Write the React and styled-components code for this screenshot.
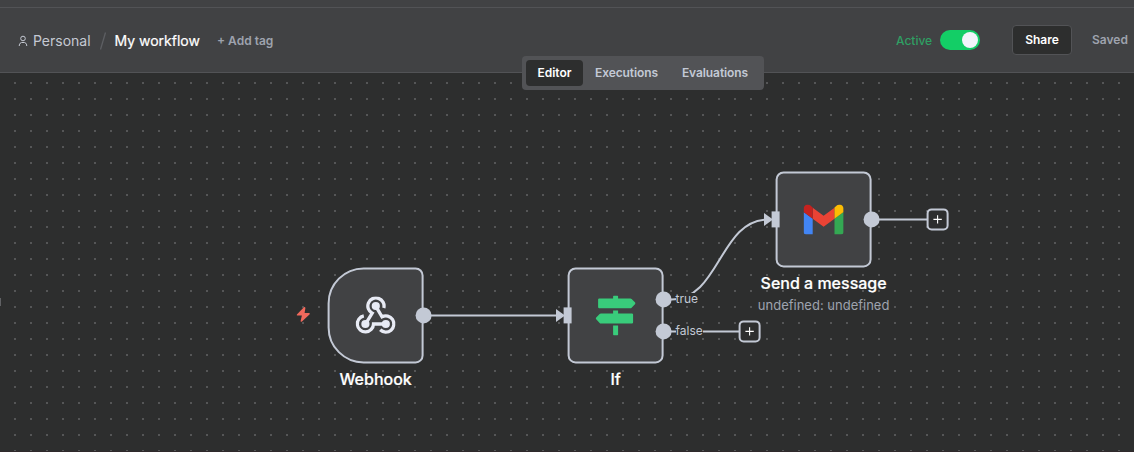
import React from "react";
import styled, { createGlobalStyle, css } from "styled-components";

const c = {
  bar: "#414244",
  line: "#525356",
  canvas: "#2d2e2e",
  dot: "#555657",
  edge: "#c3c9d5",
  muted: "#9ea3ae",
};

const Global = createGlobalStyle`
  html, body { margin: 0; height: 100%; overflow: hidden; background: ${c.canvas}; }
  * { box-sizing: border-box; }
  body { font-family: Inter, "Liberation Sans", sans-serif; }
`;

const Page = styled.div`
  display: flex;
  flex-direction: column;
  width: 1134px;
  height: 452px;
  overflow: hidden;
`;

const TopStrip = styled.div`
  flex: none;
  height: 8px;
  background: ${c.bar};
  border-bottom: 1px solid ${c.line};
`;

const Header = styled.header`
  flex: none;
  position: relative;
  display: flex;
  align-items: center;
  justify-content: space-between;
  height: 65px;
  padding: 0 6px 0 18px;
  background: ${c.bar};
  border-bottom: 1px solid ${c.line};
`;

const Crumbs = styled.div`
  display: flex;
  align-items: center;
  padding-top: 2px;
  font-size: 14px;
  line-height: 18px;
  white-space: nowrap;
`;

const UserIcon = styled.svg`
  width: 10px;
  height: 12px;
  margin-right: 5px;
`;

const Project = styled.span`
  width: 58px;
  color: #c5c9d3;
`;

const Slash = styled.svg`
  width: 8px;
  height: 20px;
  margin: 0 7.5px 0 8px;
`;

const Title = styled.span`
  width: 85.5px;
  color: #fff;
  -webkit-text-stroke: 0.2px #fff;
`;

const AddTag = styled.button`
  margin-left: 17px;
  padding: 0;
  border: 0;
  background: none;
  font: 600 12px/18px Inter, "Liberation Sans", sans-serif;
  color: ${c.muted};
`;

const Actions = styled.div`
  display: flex;
  align-items: center;
  white-space: nowrap;
`;

const Status = styled.span`
  width: 36px;
  margin: 2px 8px 0 0;
  font-size: 12px;
  font-weight: 500;
  line-height: 18px;
  color: #2f9f63;
`;

const Toggle = styled.span`
  display: flex;
  align-items: center;
  justify-content: flex-end;
  width: 40px;
  height: 20px;
  padding: 2px;
  border-radius: 10px;
  background: #13ce66;
`;

const Knob = styled.span`
  width: 16px;
  height: 16px;
  border-radius: 50%;
  background: #f2f4fa;
`;

const Share = styled.button`
  width: 60px;
  height: 30px;
  margin: 0 20px 0 32px;
  padding: 0;
  border: 1px solid ${c.line};
  border-radius: 4px;
  background: ${c.canvas};
  font: 600 12px/16px Inter, "Liberation Sans", sans-serif;
  color: #fff;
`;

const Saved = styled.span`
  width: 36px;
  font-size: 12px;
  font-weight: 600;
  line-height: 16px;
  color: ${c.muted};
`;

const Tabs = styled.nav`
  position: absolute;
  z-index: 2;
  left: 522px;
  top: 48px;
  display: flex;
  width: 242px;
  height: 34px;
  padding: 4px;
  border-radius: 4px;
  background: ${c.line};
`;

const Tab = styled.button`
  width: ${(p) => p.$width}px;
  padding: 0;
  border: 0;
  border-radius: 4px;
  background: ${(p) => (p.$active ? c.canvas : "transparent")};
  color: ${(p) => (p.$active ? "#fff" : c.edge)};
  font: 600 12px/16px Inter, "Liberation Sans", sans-serif;
  letter-spacing: ${(p) => (p.$active ? "0" : "-0.08px")};
`;

const Canvas = styled.main`
  position: relative;
  flex: 1;
  background: conic-gradient(from 270deg at 2px 2px, ${c.dot} 90deg, transparent 0) 14px 9px / 16px 16px
    ${c.canvas};
  border-bottom: 1px solid #2f292b;
`;

const Wires = styled.svg`
  position: absolute;
  left: 0;
  top: 0;
`;

const Node = styled.div`
  position: absolute;
  left: 0;
  top: 0;
  transform: translate(${(p) => p.$x}px, ${(p) => p.$y}px);
  display: flex;
  align-items: center;
  justify-content: center;
  width: 96px;
  height: 96px;
  border: 2px solid ${c.edge};
  border-radius: ${(p) => (p.$trigger ? "36px 8px 8px 36px" : "8px")};
  background: ${c.bar};
`;

const Caption = styled.div`
  position: absolute;
  top: 99.5px;
  left: 50%;
  display: flex;
  flex-direction: column;
  align-items: center;
  transform: translateX(-50%);
  white-space: nowrap;
  font-size: 16px;
  font-weight: 500;
  line-height: 20px;
  color: #fff;
  -webkit-text-stroke: 0.2px #fff;
`;

const Subtitle = styled.span`
  margin-top: 3px;
  font-size: 13px;
  font-weight: 400;
  line-height: 18px;
  color: ${c.muted};
  -webkit-text-stroke: 0;
`;

const port = css`
  position: absolute;
  top: ${(p) => p.$y}px;
  background: ${c.edge};
`;

const Output = styled.i`
  ${port}
  right: -10px;
  width: 16px;
  height: 16px;
  border-radius: 50%;
`;

const Input = styled.i`
  ${port}
  left: -6px;
  width: 8px;
  height: 16px;
`;

const WireLabel = styled.span`
  position: absolute;
  left: ${(p) => p.$x}px;
  top: ${(p) => p.$y}px;
  font-size: 12px;
  line-height: 12px;
  color: ${c.edge};
  background: ${c.canvas};
`;

const Plus = styled.button`
  position: absolute;
  left: 0;
  top: 0;
  transform: translate(${(p) => p.$x}px, ${(p) => p.$y}px);
  display: flex;
  align-items: center;
  justify-content: center;
  width: 22px;
  height: 22px;
  padding: 0;
  border: 2px solid ${c.edge};
  border-radius: 5px;
  background: ${c.canvas};
`;

const Bolt = styled.svg`
  position: absolute;
  left: 296px;
  top: 233px;
`;

const EdgeHandle = styled.i`
  position: absolute;
  left: 0;
  top: 225px;
  width: 1px;
  height: 8px;
  background: #606164;
`;

const PlusIcon = () => (
  <svg width="10" height="10" viewBox="0 0 10 10">
    <path d="M5 .8V9.2M.8 5H9.2" stroke="#fff" strokeWidth="1.1" />
  </svg>
);

const WebhookIcon = () => (
  <svg width="40" height="38" viewBox="0 0 40 38" fill="none" stroke="#e8ebf5" strokeWidth="3.3">
    <path d="M28.2 11.6A8.1 8.1 0 1 0 16.6 16.8L10.3 27" />
    <path d="M8.2 19.5A8.1 8.1 0 1 0 17.9 27.6H30" />
    <path d="M20.3 10L26.4 20.4A8.1 8.1 0 1 1 24.6 33.4" />
    <g fill="#e8ebf5" stroke="none">
      <circle cx="20.2" cy="9.6" r="4.1" />
      <circle cx="9.8" cy="27.6" r="4.1" />
      <circle cx="30.2" cy="27.6" r="4.1" />
    </g>
  </svg>
);

const SignIcon = () => (
  <svg width="40" height="40" viewBox="0 0 40 40" fill="#39cc7b">
    <path d="M17.5 3V1Q17.5 0 18.5 0H21.5Q22.5 0 22.5 1V3H34.7Q35.5 3 36 3.5L39.6 7Q40.3 7.8 39.6 8.5L36 12.3Q35.5 12.8 34.7 12.8H3.7Q2.5 12.8 2.5 11.6V4.2Q2.5 3 3.7 3Z" />
    <path d="M17.5 18V15.2H22.5V18H36.3Q37.5 18 37.5 19.2V26.8Q37.5 28 36.3 28H5.3Q4.5 28 4 27.5L.4 23.7Q-.3 23 .4 22.3L4 18.5Q4.5 18 5.3 18Z" />
    <path d="M17.5 30.2H22.5V39Q22.5 40 21.5 40H18.5Q17.5 40 17.5 39Z" />
  </svg>
);

const GmailIcon = () => (
  <svg width="40" height="30" viewBox="0 0 40 30">
    <path fill="#4285f4" d="M0 7.5 9.1 14.3V30H2.7A2.7 2.7 0 0 1 0 27.3Z" />
    <path fill="#34a853" d="M40 7.5 30.9 14.3V30H37.3A2.7 2.7 0 0 0 40 27.3Z" />
    <path fill="#ea4335" d="M9.1 3.3 20 11.4 30.9 3.3V14.3L20 22.4 9.1 14.3Z" />
    <path fill="#c5221f" d="M0 4.1C0 .7 3.8-1.2 6.5.8L9.1 3V14.3L0 7.5Z" />
    <path fill="#fbbc04" d="M40 4.1C40 .7 36.2-1.2 33.5.8L30.9 3V14.3L40 7.5Z" />
  </svg>
);

export default function App() {
  return (
    <Page>
      <Global />
      <TopStrip />
      <Header>
        <Crumbs>
          <UserIcon viewBox="0 0 10 12" fill="none" stroke="#c5c9d3" strokeWidth="1">
            <circle cx="5" cy="3.5" r="2.3" />
            <path d="M1.3 11V9.9A3 3 0 0 1 3.5 7.5H6.5A3 3 0 0 1 8.7 9.9V11" />
          </UserIcon>
          <Project>Personal</Project>
          <Slash viewBox="0 0 8 20">
            <path d="M6.5 1.5 1.5 18.5" stroke="#5d5f63" strokeWidth="1.3" />
          </Slash>
          <Title>My workflow</Title>
          <AddTag>+ Add tag</AddTag>
        </Crumbs>
        <Actions>
          <Status>Active</Status>
          <Toggle>
            <Knob />
          </Toggle>
          <Share>Share</Share>
          <Saved>Saved</Saved>
        </Actions>
        <Tabs>
          <Tab $width={57} $active>Editor</Tab>
          <Tab $width={87}>Executions</Tab>
          <Tab $width={90}>Evaluations</Tab>
        </Tabs>
      </Header>
      <Canvas>
        <EdgeHandle />
        <Wires width="1134" height="378" fill="none" stroke={c.edge} strokeWidth="2">
          <path d="M424 242.5H560" />
          <path d="M664 226.5H671.5C719.7 226.5 719.7 146.5 768 146.5" />
          <path d="M664 258.5H739" />
          <path d="M872 146.5H927" />
          <g fill={c.edge} stroke="none">
            <path d="M556 236 565 242.5 556 249Z" />
            <path d="M764 140 773 146.5 764 153Z" />
          </g>
        </Wires>
        <Bolt width="15" height="17" viewBox="0 0 15 17">
          <path
            d="M7.9 1.3.9 8.5Q.4 9.5 1.4 9.6H5.9L4.6 14.9Q4.8 16.2 6 15.5L13.7 8.2Q14.3 7 13.1 6.9H8.6L9.4 2Q9.1.5 7.9 1.3Z"
            fill="#f0695c"
          />
        </Bolt>
        <Node $x={327.6} $y={194.4} $trigger>
          <WebhookIcon />
          <Output $y={38} />
          <Caption>Webhook</Caption>
        </Node>
        <Node $x={567.6} $y={194.4}>
          <SignIcon />
          <Input $y={38} />
          <Output $y={22} />
          <Output $y={54} />
          <Caption>If</Caption>
        </Node>
        <Node $x={775.6} $y={98.4}>
          <GmailIcon />
          <Input $y={38} />
          <Output $y={38} />
          <Caption>
            Send a message
            <Subtitle>undefined: undefined</Subtitle>
          </Caption>
        </Node>
        <WireLabel $x={675.5} $y={220}>true</WireLabel>
        <WireLabel $x={675.5} $y={252}>false</WireLabel>
        <Plus $x={738.6} $y={247.4}>
          <PlusIcon />
        </Plus>
        <Plus $x={926.6} $y={135.4}>
          <PlusIcon />
        </Plus>
      </Canvas>
    </Page>
  );
}
